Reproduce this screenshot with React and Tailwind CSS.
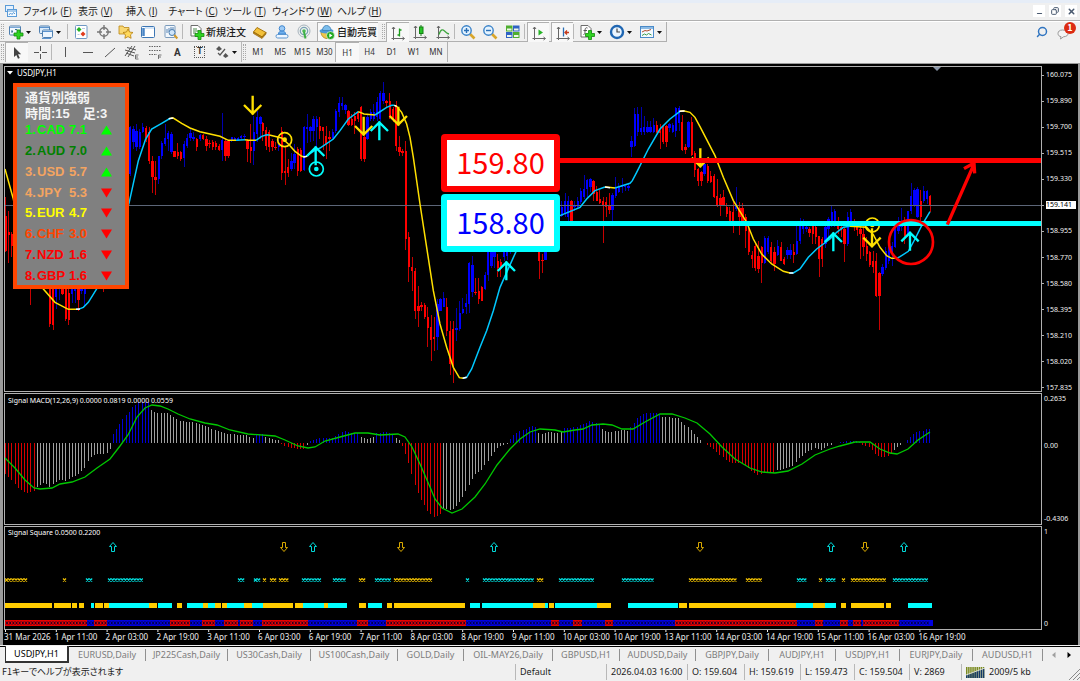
import { Search, Minus, X, Copy } from 'lucide-react';
import clsx from 'clsx';

const YELLOW = '#ffe000';
const CYAN = '#00ffff';
const SKY = '#00c8ff';

// Candle runs, drawn in thirds of a pixel: direction, high, body top, body bottom, low
const STEP = 9.525;
const CANDLES = [
    {
        start: 16,
        bars: 'd 400 455 560 565,d 440 505 512 597,d 503 510 545 579',
    },
    {
        start: 92,
        bars: 'd 600 610 640 722',
    },
    {
        start: 149,
        bars: 'd 600 620 780 790,d 600 620 782 797,u 600 620 700 735,u 600 620 665 708,d 600 620 690 693,d 600 620 766 770,d 600 686 768 783,u 600 640 690 716,u 600 640 680 718,d 600 675 708 740,u 600 620 680 690,u 600 620 690 728',
    },
    {
        start: 310,
        bars: 'd 600 620 670 684',
    },
    {
        start: 390,
        bars: 'u 185 190 330 335,u 185 195 235 255,u 180 200 250 260,u 195 205 250 255,u 177 190 203 208,d 185 192 222 235,d 190 205 292 300,d 275 292 338 387,d 290 338 347 392,u 275 275 345 360,u 230 238 275 285,u 180 222 240 245,u 200 207 225 260,u 203 210 265 270,d 262 262 278 280,d 238 265 275 285,d 262 265 285 290,u 230 240 282 308,u 210 222 245 252,u 195 207 222 230,u 205 220 224 230,d 222 225 250 262,u 210 213 225 232,d 210 213 225 228,d 215 225 245 262,d 228 237 241 252,d 228 233 248 258,d 232 237 248 258,d 240 245 258 262,u 148 228 258 290,d 225 230 275 292,d 228 230 275 283,u 218 220 232 235,u 218 222 230 232,u 218 222 230 232,u 212 217 222 228,u 210 215 220 226,d 225 230 255 295,d 180 248 262 298,u 155 205 262 303,u 140 160 210 235,u 155 160 180 225',
    },
    {
        start: 788,
        bars: 'd 175 177 200 230,d 190 197 245 258,d 198 205 250 265,d 225 232 250 260,d 235 248 253 258,u 215 240 250 260,d 190 200 328 347,d 245 320 328 363,d 285 310 328 340,u 268 292 315 320,u 240 270 298 315,d 250 255 320 335,d 253 258 322 324,u 185 188 318 320,u 150 190 195 238,u 185 190 200 235,u 155 165 200 232,u 155 165 188 250,d 160 185 200 225,d 190 190 202 258,d 185 215 240 285,d 200 218 225 260,u 195 205 222 228,u 135 142 202 206,u 100 118 145 160,u 98 118 125 138,u 120 122 138 150,d 138 140 183 186,d 150 165 183 186,d 145 155 172 210,d 140 145 165 175,d 125 130 285 290,d 215 220 285 295,u 150 160 225 228,u 135 145 165 170,u 120 145 165 170,u 100 115 160 170,u 82 88 165 170,u 55 88 112 120,d 107 110 118 130,d 87 110 160 165,d 130 135 162 175,d 110 130 245 262,d 215 248 265 275,d 255 262 268 277,d 230 262 525 558,d 505 520 610 655,d 580 610 620 682,d 612 620 740 765,d 667 725 740 788,d 715 722 728 742,d 718 722 760 765,d 730 760 792 850,d 752 790 827 890,d 758 820 826 862,u 705 720 818 858,u 702 705 740 742,u 685 702 728 730,d 702 728 802 817,d 770 802 900 933,d 772 795 902 957,u 733 793 797 832,u 712 748 795 800,u 702 735 748 750,u 690 718 730 750,u 595 598 720 748,u 575 602 685 700,d 642 683 688 692,d 643 680 705 720,d 665 668 710 712,u 625 632 675 678,u 540 550 632 652,u 540 550 605 612,u 540 550 580 612,d 570 590 612 638,d 585 595 612 640,u 540 550 580 590,u 540 550 575 588,u 520 530 560 570',
    },
    {
        start: 1617,
        bars: 'd 540 550 590 645,d 570 587 592 627,u 550 560 588 589',
    },
    {
        start: 1685,
        bars: 'u 410 430 455 458,u 388 410 450 460,u 395 410 460 470,d 408 410 470 472,u 410 425 430 440,u 400 412 428 432,u 372 380 415 420,u 332 375 400 405,u 345 348 375 400,u 342 345 370 385,d 348 352 390 412,d 365 385 410 412,d 378 405 418 420,d 400 412 425 537,d 400 415 430 460,d 388 425 437 450,u 388 392 437 475,u 340 372 395 402,u 358 365 385 388,u 342 362 368 388,u 360 365 370 380,u 358 365 372 382',
    },
    {
        start: 1894,
        bars: 'u 215 232 248 280,u 132 150 245 248,u 128 150 203 215,u 130 192 203 212,u 157 190 203 212,u 170 190 205 208,u 170 190 205 208,u 162 183 203 206,d 172 183 205 208,d 180 200 208 255,d 182 188 235 240,d 182 185 235 250,u 177 180 192 205,u 178 182 205 208,u 128 132 200 218,u 127 132 178 200,d 152 175 258 262,d 240 250 258 270,u 170 173 250 252,d 160 173 272 275,d 262 268 318 340,d 313 315 352 365,d 320 325 352 365,u 298 300 330 335,d 300 305 352 358,d 320 335 355 358,d 330 335 400 402,d 345 395 425 430,d 390 402 425 455,d 377 400 422 425,d 418 428 450 458,d 430 440 470 474,d 415 445 475 508,u 370 420 435 440,d 415 432 460 512,d 417 432 475 480,d 450 460 500 552,d 488 495 565 572,d 560 572 585 612,d 540 545 612 620,d 532 575 615 628,d 545 550 598 657,u 515 523 598 600,u 515 523 565 570,d 535 550 590 598,d 550 565 600 620',
    },
    {
        start: 2333,
        bars: 'u 528 545 572 575,d 535 548 590 592,d 580 585 600 602,u 550 558 573 585,u 540 558 572 585,d 540 565 572 597,u 480 530 570 572,u 462 480 530 540,u 465 480 495 510,u 480 490 495 505,d 490 495 508 520,d 480 485 510 540,d 485 490 520 540,d 515 517 585 638,d 518 525 585 608,u 485 490 540 552,u 460 465 495 520,u 422 445 470 490,u 435 442 480 490,d 460 470 495 510,d 485 488 498 520,d 490 495 540 595,u 445 460 540 545,u 435 443 475 485,d 465 475 485 500,d 480 490 498 515,d 485 495 510 585,d 485 510 550 575,d 520 545 570 590,d 560 563 602 610,d 560 590 608 627,d 567 590 695 698,d 625 627 695 797,u 600 610 630 635,u 550 560 612 618,u 545 550 590 600,u 535 545 570 605,u 490 495 550 552,u 460 480 500 510,u 433 485 490 500,d 460 475 515 540,u 440 442 510 520,u 358 395 442 450,u 372 378 425 430,u 370 375 460 462,d 378 412 460 470,u 367 380 412 418,u 378 382 405 420,d 394 395 425 445',
    },
];

const AVERAGE = [
    [YELLOW, '15,315 40,405 60,500 90,610 130,675 165,715 205,736 228,736'],
    [SKY, '228,736 235,736 250,730 265,715 290,675 340,560 387,418 415,290 437,225 455,195 485,178 512,162'],
    [YELLOW, '512,162 520,162 545,178 570,192 600,203 660,217 685,229 708,229'],
    [SKY, '708,229 735,227'],
    [YELLOW, '735,227 745,229 768,229'],
    [SKY, '768,229 785,217 800,212 808,213'],
    [YELLOW, '808,213 845,222 865,240 885,262 905,277 915,279'],
    [SKY, '915,279 940,262 960,252 1000,225 1020,200 1045,165 1075,143'],
    [YELLOW, '1075,143 1092,150 1125,153'],
    [SKY, '1125,153 1160,130 1175,124 1183,124'],
    [YELLOW, '1183,124 1190,127 1205,145 1220,180 1230,220 1240,280 1260,420 1280,550 1300,680 1320,780 1340,850 1360,910 1378,941 1390,943'],
    [SKY, '1390,943 1400,940 1415,915 1440,850 1460,800 1480,740 1500,670 1520,625 1547,565 1600,500 1680,455 1740,430 1760,405 1785,380 1815,369'],
    [YELLOW, '1815,369 1825,370 1845,372'],
    [SKY, '1845,372 1890,358 1897,350 1910,325 1945,255 1980,195 2010,165 2040,142'],
    [YELLOW, '2040,142 2050,140 2070,145 2085,160 2100,188 2145,275 2170,340 2200,410 2240,475 2260,525 2285,570 2315,600 2350,622 2370,627'],
    [SKY, '2370,627 2380,627 2400,615 2425,580 2450,555 2490,525 2510,505 2530,490 2550,487'],
    [YELLOW, '2550,487 2600,490 2620,512 2640,550 2660,575 2675,583 2690,583'],
    [SKY, '2690,583 2700,578 2725,562 2745,525 2765,485 2790,443'],
];

const TURNS = ['228,736 240,735', '506,164 520,162', '910,279 922,277', '1183,124 1190,127', '1388,943 1400,940', '1815,369 1830,371', '2038,142 2054,141', '2368,627 2380,627'];

const ARROWS = [
    { dir: 'down', x: 758, tip: 152 },
    { dir: 'up', x: 947, tip: 247 },
    { dir: 'down', x: 1091, tip: 215 },
    { dir: 'up', x: 1138, tip: 172 },
    { dir: 'down', x: 1195, tip: 185 },
    { dir: 'up', x: 1519, tip: 592 },
    { dir: 'down', x: 2101, tip: 310 },
    { dir: 'up', x: 2500, tip: 505 },
    { dir: 'down', x: 2616, tip: 550 },
    { dir: 'up', x: 2730, tip: 503 },
];

const TARGETS = [
    [854, 227, YELLOW],
    [949, 315, CYAN],
    [2617, 483, YELLOW],
];

const PRICES = ['160.075', '159.890', '159.700', '159.515', '159.330', '159.141', '158.955', '158.770', '158.580', '158.395', '158.210', '158.020', '157.835'];
const LAST_PRICE = '159.141';

const STRENGTH = [
    { code: 'CAD', value: '7.1', up: true, color: 'text-[#00ff00]' },
    { code: 'AUD', value: '7.0', up: true, color: 'text-[#008000]' },
    { code: 'USD', value: '5.7', up: true, color: 'text-[#f4a460]' },
    { code: 'JPY', value: '5.3', up: false, color: 'text-[#f4a460]' },
    { code: 'EUR', value: '4.7', up: false, color: 'text-[#ffff00]' },
    { code: 'CHF', value: '3.0', up: false, color: 'text-[#ff4500]' },
    { code: 'NZD', value: '1.6', up: false, color: 'text-[#ff0000]' },
    { code: 'GBP', value: '1.6', up: false, color: 'text-[#ff0000]' },
];

const ZERO = 443;
const HISTOGRAM = [
    ['#d80000', [[5, 474], [10, 478], [15, 485], [20, 490], [27, 493], [36, 490]]],
    ['#a0a0a0', [[36, 487], [44, 482], [50, 487], [55, 482], [60, 479], [66, 481], [72, 477], [78, 474], [84, 469], [88, 460], [93, 455], [107, 453], [112, 445]]],
    ['#0000d8', [[112, 436], [117, 428], [122, 419], [128, 413], [133, 406], [139, 402], [150, 402]]],
    ['#a0a0a0', [[150, 409], [156, 413], [168, 413], [174, 418], [180, 421], [190, 422], [200, 424], [210, 428], [220, 432], [228, 434], [245, 435], [253, 438]]],
    ['#0000d8', [[253, 434], [265, 434]]],
    ['#a0a0a0', [[265, 437], [280, 441]]],
    ['#d80000', [[280, 444], [290, 448], [304, 449]]],
    ['#a0a0a0', [[304, 446], [308, 445]]],
    ['#0000d8', [[308, 441], [320, 438], [332, 438], [340, 433], [345, 431], [352, 433], [360, 433]]],
    ['#a0a0a0', [[360, 437], [368, 439], [376, 436]]],
    ['#0000d8', [[376, 433], [388, 432], [395, 435]]],
    ['#a0a0a0', [[395, 438], [401, 442]]],
    ['#d80000', [[401, 444], [408, 462], [415, 487], [422, 502], [428, 512], [434, 517], [443, 513]]],
    ['#a0a0a0', [[443, 509], [452, 510], [458, 504], [466, 490], [474, 475], [482, 469], [490, 457], [498, 447], [507, 444]]],
    ['#0000d8', [[507, 442], [514, 434], [522, 430], [532, 426], [538, 428]]],
    ['#a0a0a0', [[538, 433], [543, 434], [549, 431], [555, 433], [561, 432]]],
    ['#0000d8', [[561, 429], [566, 428], [576, 427], [590, 421], [599, 424]]],
    ['#a0a0a0', [[599, 427], [605, 431], [610, 432], [622, 430], [630, 431]]],
    ['#0000d8', [[630, 428], [636, 419], [642, 414], [650, 413], [657, 413], [662, 415]]],
    ['#a0a0a0', [[662, 417], [678, 418], [682, 423], [690, 429], [695, 435], [702, 442]]],
    ['#d80000', [[706, 444], [715, 451], [722, 457], [730, 463], [742, 463], [750, 470], [758, 475], [765, 473], [774, 473]]],
    ['#a0a0a0', [[774, 471], [782, 469], [792, 466], [800, 457], [808, 451], [815, 448], [820, 450], [826, 447], [832, 444]]],
    ['#0000d8', [[840, 442], [852, 441], [861, 442]]],
    ['#d80000', [[861, 444], [870, 448], [877, 456], [883, 458], [891, 454]]],
    ['#a0a0a0', [[891, 452], [897, 447], [903, 444]]],
    ['#0000d8', [[905, 442], [912, 435], [915, 432], [922, 431], [926, 429], [932, 428]]],
];

const SIGNAL_LINE =
    '5,458 15,468 25,480 34,488 40,489 52,488 60,484 72,482 85,477 97,468 110,459 120,446 128,435 137,417 145,408 152,405 160,406 168,409 178,414 190,419 205,423 217,425 230,430 248,434 275,436 285,440 298,446 308,448 315,447 325,441 340,437 355,433 368,433 380,435 398,434 405,437 412,447 420,464 430,487 435,499 442,508 452,513 462,509 475,497 485,484 497,465 510,449 520,439 530,432 540,429 555,430 563,432 575,430 583,429 592,425 603,424 612,425 622,429 633,429 645,422 660,414 672,414 685,418 697,423 710,434 722,447 735,459 750,468 762,472 775,473 788,471 802,464 815,455 830,449 840,446 855,442 870,442 880,449 890,453 897,454 908,449 918,440 930,432';

const CROSSES = [
    ['y', 5, 29], ['y', 63, 67], ['c', 86, 95], ['c', 108, 146], ['c', 238, 245], ['c', 254, 263], ['y', 263, 267], ['y', 270, 277],
    ['y', 279, 289], ['c', 302, 324], ['c', 333, 346], ['y', 359, 366], ['c', 375, 393], ['y', 394, 435], ['c', 466, 470], ['c', 483, 534],
    ['y', 537, 544], ['c', 559, 594], ['c', 622, 654], ['y', 689, 737], ['y', 746, 763], ['c', 797, 807], ['y', 819, 823], ['c', 826, 836],
    ['y', 842, 846], ['y', 851, 887], ['c', 893, 928],
];

const BLOCKS = [
    ['y', 5, 52], ['y', 54, 71], ['y', 72, 77], ['y', 79, 84], ['c', 91, 94], ['y', 95, 103], ['y', 104, 109], ['c', 109, 149],
    ['y', 149, 157], ['c', 158, 172], ['y', 177, 182], ['c', 187, 203], ['y', 203, 208], ['c', 208, 215], ['y', 215, 221], ['y', 222, 227],
    ['c', 227, 244], ['y', 244, 252], ['c', 252, 263], ['y', 263, 293], ['y', 295, 303], ['c', 303, 324], ['y', 324, 328], ['c', 328, 347],
    ['y', 359, 366], ['c', 368, 382], ['y', 387, 392], ['y', 394, 465], ['c', 470, 480], ['c', 482, 533], ['y', 533, 545], ['c', 545, 548],
    ['y', 549, 554], ['c', 555, 597], ['y', 597, 611], ['c', 628, 678], ['y', 679, 687], ['y', 689, 796], ['c', 796, 813], ['y', 813, 825],
    ['c', 825, 836], ['y', 841, 846], ['y', 851, 884], ['y', 886, 891], ['c', 908, 932],
];

const DOWNTREND = [
    [5, 87], [94, 107], [170, 190], [202, 215], [224, 238], [240, 253], [262, 308], [357, 368], [386, 466],
    [551, 559], [573, 582], [605, 613], [675, 797], [815, 823], [840, 848], [853, 861], [863, 899],
];

const HOLLOW_ARROWS = [['up', 113], ['down', 284], ['up', 313], ['down', 401], ['up', 494], ['down', 700], ['up', 831], ['down', 865], ['up', 904]];

const TIMES = [
    '31 Mar 2026', '1 Apr 11:00', '2 Apr 03:00', '2 Apr 19:00', '3 Apr 11:00', '6 Apr 03:00', '6 Apr 19:00', '7 Apr 11:00', '8 Apr 03:00', '8 Apr 19:00',
    '9 Apr 11:00', '10 Apr 03:00', '10 Apr 19:00', '13 Apr 11:00', '14 Apr 03:00', '14 Apr 19:00', '15 Apr 11:00', '16 Apr 03:00', '16 Apr 19:00',
];

const MENU = [
    ['ファイル', 'F', 'w-[55px]'],
    ['表示', 'V', 'w-[48px]'],
    ['挿入', 'I', 'w-[42px]'],
    ['チャート', 'C', 'w-[55px]'],
    ['ツール', 'T', 'w-[49px]'],
    ['ウィンドウ', 'W', 'w-[65px]'],
    ['ヘルプ', 'H', 'w-[55px]'],
];

const TABS = [
    ['EURUSD,Daily', 'w-[77px]'],
    ['JP225Cash,Daily', 'w-[82px]'],
    ['US30Cash,Daily', 'w-[83px]'],
    ['US100Cash,Daily', 'w-[87px]'],
    ['GOLD,Daily', 'w-[66px]'],
    ['OIL-MAY26,Daily', 'w-[89px]'],
    ['GBPUSD,H1', 'w-[67px]'],
    ['AUDUSD,Daily', 'w-[76px]'],
    ['GBPJPY,Daily', 'w-[73px]'],
    ['AUDJPY,H1', 'w-[67px]'],
    ['USDJPY,H1', 'w-[64px]'],
    ['EURJPY,Daily', 'w-[73px]'],
    ['AUDUSD,H1', 'w-[70px]'],
];

const STATUS = [
    ['Default', 'w-[91px]'],
    ['2026.04.03 16:00', 'w-[81px]'],
    ['O: 159.604', 'w-[57px]'],
    ['H: 159.619', 'w-[56px]'],
    ['L: 159.473', 'w-[54px]'],
    ['C: 159.504', 'w-[55px]'],
    ['V: 2869', 'w-[52px]'],
];

const TIMEFRAMES = ['M1', 'M5', 'M15', 'M30', 'H1', 'H4', 'D1', 'W1', 'MN'];

/* ---------- icons ---------- */

const Icon = ({ children }) => (
    <svg width="16" height="16" viewBox="0 0 16 16" fill="none" className="shrink-0" aria-hidden="true">
        {children}
    </svg>
);

const Plus = ({ x = 6, y = 6 }) => (
    <path
        d={`M${x + 3} ${y}h3v3h3v3h-3v3h-3v-3h-3v-3h3z`}
        fill="#2fd321"
        stroke="#118a0c"
        strokeWidth="0.8"
    />
);

const NewChartIcon = () => (
    <Icon>
        <rect x="1.5" y="2" width="11" height="9" rx="1" fill="#f4f9ff" stroke="#5080b0" />
        <path d="M2 3.5h10" stroke="#7aa8d8" />
        <path d="M3.5 7.5h1.5M4 6v3M7 5.5h2" stroke="#407090" />
        <Plus />
    </Icon>
);

const ProfilesIcon = () => (
    <Icon>
        <rect x="1.5" y="2" width="10" height="7.5" rx="1" fill="#dcecfb" stroke="#5080b0" />
        <path d="M2 3.5h9" stroke="#5b93cf" />
        <rect x="4.5" y="6" width="10" height="7.5" rx="1" fill="#edf6ff" stroke="#5080b0" />
        <path d="M5 7.5h9M4 14.5h9" stroke="#5b93cf" />
    </Icon>
);

const MarketIcon = () => (
    <Icon>
        <rect x="2.5" y="1.5" width="11.5" height="13" rx="1" fill="#fff" stroke="#6f98c4" />
        <path d="M3.5 5.5L6 3l2.5 2.5L6 8z" fill="#22b422" />
        <path d="M7.5 10L10 7.5l2.5 2.5-2.5 2.5z" fill="#e13b1c" />
        <path d="M9 4.5h3M4.5 10.5h2" stroke="#b9cde0" />
    </Icon>
);

const CrosshairIcon = () => (
    <Icon>
        <circle cx="8" cy="8" r="4.2" stroke="#777" strokeWidth="1.4" />
        <path d="M8 1v5M8 10v5M1 8h5M10 8h5" stroke="#777" strokeWidth="1.4" />
    </Icon>
);

const NavigatorIcon = () => (
    <Icon>
        <path d="M1 2h4l1 1.5h5V10H1z" fill="#f9d873" stroke="#b98514" strokeWidth="0.8" />
        <path d="M10 5l1.5 3 3.5.5-2.5 2.3.6 3.5-3.1-1.7-3.1 1.7.6-3.5L5 8.5l3.5-.5z" fill="#ffd95c" stroke="#b57d0c" strokeWidth="0.8" />
    </Icon>
);

const TerminalIcon = () => (
    <Icon>
        <rect x="1.5" y="2.5" width="13" height="11" rx="1" fill="#fff" stroke="#3c76b4" />
        <path d="M3.5 4v8" stroke="#4a86c6" strokeWidth="2.5" />
        <path d="M5 4h9" stroke="#a9cbee" />
    </Icon>
);

const TesterIcon = () => (
    <Icon>
        <rect x="2" y="1.5" width="10" height="12" rx="1" fill="#f2f7fc" stroke="#7a9abb" />
        <path d="M4 9V5M6 8V4M8 6V3M10 7V3" stroke="#5a86b5" />
        <circle cx="9" cy="8.5" r="3" fill="#cfe6fb" stroke="#4a7cae" />
        <path d="M11.3 11l3 3.5" stroke="#d29a2a" strokeWidth="2" />
    </Icon>
);

const NewOrderIcon = () => (
    <Icon>
        <path d="M2 1.5h7l3 3V12H2z" fill="#fff" stroke="#6d6d6d" />
        <path d="M4 5h4M4 7h5M4 9h3" stroke="#4a8a4a" />
        <Plus x={6} y={6.5} />
    </Icon>
);

const BookIcon = () => (
    <Icon>
        <path d="M5 3.5l9 5L10 13 1.5 8z" fill="#f3c13a" stroke="#a8760e" />
        <path d="M1.5 8v1.5L10 14.5l4-4.5V8.5L10 13z" fill="#c98d15" stroke="#8f640c" strokeWidth="0.7" />
    </Icon>
);

const AccountIcon = () => (
    <Icon>
        <circle cx="8" cy="4.5" r="2.8" fill="#9ccaf5" stroke="#3f86cf" />
        <path d="M4.5 10c0-2 1.5-3 3.5-3s3.5 1 3.5 3z" fill="#6fb0ee" stroke="#3f86cf" />
        <rect x="2" y="10.5" width="12" height="3.5" rx="1.7" fill="#eef6ff" stroke="#5a95d0" />
    </Icon>
);

const SignalsIcon = () => (
    <Icon>
        <circle cx="8" cy="7" r="6" stroke="#a8b4bd" />
        <circle cx="8" cy="7" r="3.7" stroke="#7aa4b4" strokeWidth="1.3" />
        <circle cx="8" cy="7" r="1.8" fill="#4ab854" />
        <path d="M8 8l1.5 6.5" stroke="#3cb043" strokeWidth="2" />
    </Icon>
);

const RobotIcon = () => (
    <Icon>
        <path d="M2 8c0 4 3 6.5 6 6.5S13 12 13 8z" fill="#f0c64a" stroke="#a9801a" strokeWidth="0.8" />
        <ellipse cx="7.5" cy="7" rx="7" ry="2.5" fill="#4e9ad6" />
        <path d="M3.5 6.5C3.5 3 5.5 1.5 7.5 1.5S12 3 12 6.5z" fill="#7bbdec" stroke="#3a7db5" strokeWidth="0.8" />
        <circle cx="11.5" cy="11.5" r="4" fill="#22a822" stroke="#fff" strokeWidth="0.6" />
        <path d="M10.3 9.5v4l3.2-2z" fill="#fff" />
    </Icon>
);

const AxisBase = () => <path d="M3.5 2v11.5H14M2 4l1.5-2L5 4M12.5 12l2 1.5-2 1.5M1.5 13.5h2v1.5" stroke="#666" />;

const BarsIcon = () => (
    <Icon>
        <AxisBase />
        <path d="M9.5 3.5v8M9.5 5h2M7.5 10h2" stroke="#1b9a1b" strokeWidth="1.3" />
    </Icon>
);

const CandlesIcon = () => (
    <Icon>
        <AxisBase />
        <path d="M9 1v11" stroke="#1b7a1b" />
        <rect x="7.5" y="3" width="3.5" height="6.5" fill="#27c427" stroke="#138013" />
    </Icon>
);

const LineIcon = () => (
    <Icon>
        <AxisBase />
        <path d="M4 10.5c2-6 4-5 5.5-3.5s2.5 2.5 4.5 3" stroke="#3fa63f" strokeWidth="1.3" />
    </Icon>
);

const ZoomIcon = ({ plus }) => (
    <Icon>
        <path d="M10 10l4.5 4.5" stroke="#d9a62b" strokeWidth="2.6" />
        <circle cx="6.5" cy="6.5" r="4.7" fill="#e4f3ff" stroke="#3a82c8" strokeWidth="1.4" />
        <path d={plus ? 'M4 6.5h5M6.5 4v5' : 'M4 6.5h5'} stroke="#2a6fb5" strokeWidth="1.4" />
    </Icon>
);

const TileIcon = () => (
    <Icon>
        <rect x="1" y="1.5" width="6.5" height="6" fill="#4fae2f" />
        <rect x="8" y="1.5" width="6.5" height="6" fill="#2f62c4" />
        <rect x="1" y="8" width="6.5" height="6" fill="#2f62c4" />
        <rect x="8" y="8" width="6.5" height="6" fill="#4fae2f" />
        <path d="M2 5.5h4.5M9 5.5h4.5M2 12h4.5M9 12h4.5" stroke="#eef6e8" strokeWidth="2" />
    </Icon>
);

const ScrollIcon = () => (
    <Icon>
        <AxisBase />
        <path d="M7.5 4.5v6l4.5-3z" fill="#27b427" />
    </Icon>
);

const ShiftIcon = () => (
    <Icon>
        <AxisBase />
        <path d="M8.5 2.5v9" stroke="#2a6fb5" strokeWidth="1.3" />
        <path d="M10 7.5h4M12 5.5l-2 2 2 2" stroke="#c43b1c" strokeWidth="1.3" />
    </Icon>
);

const IndicatorIcon = () => (
    <Icon>
        <path d="M2 1.5h7l3 3V13H2z" fill="#fff" stroke="#6d6d6d" />
        <path d="M8.5 4c-2-1-2.5 1-2.5 3s0 3.5-1.5 3.5M4.5 6.5H8" stroke="#555" />
        <Plus x={6.5} y={6.5} />
    </Icon>
);

const ClockIcon = () => (
    <Icon>
        <circle cx="8" cy="8" r="6" fill="#eaf5ff" stroke="#1f66b2" strokeWidth="2.4" />
        <path d="M8 4.5V8h3" stroke="#444" strokeWidth="1.2" />
    </Icon>
);

const TemplateIcon = () => (
    <Icon>
        <rect x="1.5" y="2.5" width="13" height="11" fill="#f4faff" stroke="#4a8ac8" />
        <path d="M2 4h12" stroke="#6aa6dd" strokeWidth="1.5" />
        <path d="M3 8l3-1.5 2 .5 4-1.5" stroke="#b04a2a" />
        <path d="M3 11.5L5.5 10l2 1 2-1.5 3 1.5" stroke="#3a9a4a" />
    </Icon>
);

const CursorIcon = () => (
    <Icon>
        <path d="M5 2v10l2.3-2L9 13.8l1.8-.8L9 9.3h3.2z" fill="#444" />
    </Icon>
);

const ToolIcon = ({ d }) => (
    <Icon>
        <path d={d} stroke="#555" />
    </Icon>
);

const ChannelIcon = () => (
    <Icon>
        <path d="M1 12L8 2M4 13l7-11M1 6l10 3M3 3.5L12 6M2 9l8 3" stroke="#555" />
        <path d="M14.5 11h-3v4h3M11.5 13H14" stroke="#555" strokeWidth="0.8" />
    </Icon>
);

const FiboIcon = () => (
    <Icon>
        <path d="M2 2.5h12M2 6.5h12M2 10.5h8" stroke="#666" strokeDasharray="1.5 1" />
        <path d="M11.5 15v-4h3M11.5 13h2.5" stroke="#555" strokeWidth="0.8" />
    </Icon>
);

const ObjectsIcon = () => (
    <Icon>
        <path d="M2 5l3-3 3 3-3 2zM9 12l2.5-3 3 3-3 2z" fill="#555" />
        <path d="M4 9l2 2 5-6" stroke="#555" strokeWidth="1.2" />
    </Icon>
);

/* ---------- toolbar pieces ---------- */

const Handle = () => <span className="mx-px my-0.5 w-[3px] shrink-0 border-x border-dotted border-[#a8a8a8]" />;

const Divider = () => <span className="my-0.5 w-[3px] shrink-0 border-l border-[#b8b8b8]" />;

const Caret = () => (
    <svg width="5" height="3" viewBox="0 0 5 3" aria-hidden="true">
        <path d="M0 0h5L2.5 3z" fill="#111" />
    </svg>
);

const ToolButton = ({ label, pressed, caret, children }) => (
    <button
        type="button"
        aria-label={label}
        className={clsx(
            'flex h-5 items-center',
            caret ? 'w-[30px] shrink-0 gap-0.5 pl-[3px]' : 'min-w-0 flex-1 justify-center',
            pressed && 'border-t border-l border-[#b0b0b0] bg-[#f8f8f8]',
        )}
    >
        {children}
        {caret && <Caret />}
    </button>
);

const MenuBar = () => (
    <div className="flex h-4 items-center pl-[5px]">
        <svg width="12" height="12" viewBox="0 0 12 12" fill="none" className="mr-1.5 shrink-0" aria-hidden="true">
            <rect x="0.5" y="0.5" width="8" height="6" fill="#e6f2ff" stroke="#5a9bd8" />
            <rect x="2.5" y="4.5" width="9" height="7" fill="#f4faff" stroke="#5a9bd8" />
            <path d="M3 6h8M4 10l1.5-2L7 9.5l1.5-2L10 9" stroke="#5a9bd8" />
        </svg>
        <nav className="flex flex-1 text-[10px] leading-4 [font-feature-settings:'palt']">
            {MENU.map(([name, key, width]) => (
                <button key={key} type="button" className={clsx('shrink-0 whitespace-nowrap text-left', width)}>
                    {name} (<u>{key}</u>)
                </button>
            ))}
        </nav>
        <div className="flex gap-1 pr-[3px] text-[#4a5a70]">
            <button type="button" aria-label="Minimize" className="flex h-3 w-3 items-end justify-center bg-white">
                <Minus size={7} strokeWidth={4} />
            </button>
            <button type="button" aria-label="Restore" className="flex h-3 w-3 items-center justify-center bg-white">
                <Copy size={8} strokeWidth={3} className="-scale-x-100" />
            </button>
            <button type="button" aria-label="Close" className="flex h-3 w-3 items-center justify-center bg-white">
                <X size={9} strokeWidth={4} />
            </button>
        </div>
    </div>
);

const MainToolbar = () => (
    <div className="flex h-[21px] items-center justify-between border-t border-white">
        <div className="flex h-5 border-r border-b border-[#b0b0b0]">
            <Handle />
            <ToolButton label="New chart" caret><NewChartIcon /></ToolButton>
            <ToolButton label="Profiles" caret><ProfilesIcon /></ToolButton>
            <span className="w-0.5" />
            <Divider />
            <div className="flex w-[112px]">
                <ToolButton label="Market watch"><MarketIcon /></ToolButton>
                <ToolButton label="Data window"><CrosshairIcon /></ToolButton>
                <ToolButton label="Navigator"><NavigatorIcon /></ToolButton>
                <ToolButton label="Terminal"><TerminalIcon /></ToolButton>
                <ToolButton label="Strategy tester"><TesterIcon /></ToolButton>
            </div>
            <Divider />
            <button type="button" className="flex w-16 items-center gap-px pl-1 text-[10px] leading-4 font-medium whitespace-nowrap">
                <NewOrderIcon />
                新規注文
            </button>
            <div className="flex w-[66px]">
                <ToolButton label="MetaEditor"><BookIcon /></ToolButton>
                <ToolButton label="Account"><AccountIcon /></ToolButton>
                <ToolButton label="Signals"><SignalsIcon /></ToolButton>
            </div>
            <button
                type="button"
                className="mr-[3px] ml-0.5 flex w-[61px] items-center gap-0.5 border-t border-l border-[#b0b0b0] bg-[#f8f8f8] pl-px text-[10px] leading-4 font-medium whitespace-nowrap"
            >
                <RobotIcon />
                自動売買
            </button>
            <Handle />
            <div className="flex w-[68px]">
                <ToolButton label="Bar chart" pressed><BarsIcon /></ToolButton>
                <ToolButton label="Candlesticks"><CandlesIcon /></ToolButton>
                <ToolButton label="Line chart"><LineIcon /></ToolButton>
            </div>
            <Divider />
            <div className="flex w-[67px]">
                <ToolButton label="Zoom in"><ZoomIcon plus /></ToolButton>
                <ToolButton label="Zoom out"><ZoomIcon /></ToolButton>
                <ToolButton label="Tile windows"><TileIcon /></ToolButton>
            </div>
            <Divider />
            <div className="flex w-[46px] gap-0.5">
                <ToolButton label="Auto scroll" pressed><ScrollIcon /></ToolButton>
                <ToolButton label="Chart shift" pressed><ShiftIcon /></ToolButton>
            </div>
            <Divider />
            <ToolButton label="Indicators" caret><IndicatorIcon /></ToolButton>
            <ToolButton label="Periods" caret><ClockIcon /></ToolButton>
            <ToolButton label="Templates" caret><TemplateIcon /></ToolButton>
        </div>
        <div className="flex items-center gap-2 pr-1">
            <button type="button" aria-label="Search">
                <Search size={12} strokeWidth={3} className="-scale-x-100 text-[#2f74c0]" />
            </button>
            <button type="button" aria-label="Notifications" className="relative h-4 w-5">
                <svg width="12" height="12" viewBox="0 0 12 12" className="mt-1 ml-px" aria-hidden="true">
                    <path d="M5.5 2C2.5 2 1 3.5 1 5.5S2.5 8.5 4 8.7L3.5 11l3-2.2C9.5 8.5 11 7.5 11 5.5S8.5 2 5.5 2z" fill="#f4f4f4" stroke="#999" />
                </svg>
                <span className="absolute -top-0.5 right-0 flex h-3 w-3 items-center justify-center rounded-full bg-[#dc2c12] text-[9px] leading-3 font-bold text-white">1</span>
            </button>
        </div>
    </div>
);

const DrawingToolbar = () => (
    <div className="flex h-[21px]">
        <div className="flex h-5 border-r border-[#b0b0b0] text-[#333]">
            <Handle />
            <div className="flex w-[46px] gap-0.5">
                <ToolButton label="Cursor" pressed><CursorIcon /></ToolButton>
                <ToolButton label="Crosshair"><ToolIcon d="M8.5 2v5M8.5 10v5M2 8.5h5M10 8.5h5" /></ToolButton>
            </div>
            <Divider />
            <div className="flex w-[157px]">
                <ToolButton label="Vertical line"><ToolIcon d="M8.5 3v10" /></ToolButton>
                <ToolButton label="Horizontal line"><ToolIcon d="M3 8.5h10" /></ToolButton>
                <ToolButton label="Trendline"><ToolIcon d="M3 13L13 4" /></ToolButton>
                <ToolButton label="Channel"><ChannelIcon /></ToolButton>
                <ToolButton label="Fibonacci"><FiboIcon /></ToolButton>
                <ToolButton label="Text"><span className="font-[Roboto] text-[10px] font-bold">A</span></ToolButton>
                <ToolButton label="Text label">
                    <span className="flex h-3 w-[11px] items-center justify-center border border-dotted border-[#555] font-[Roboto] text-[9px] font-bold">T</span>
                </ToolButton>
            </div>
            <div className="flex border-r border-[#b8b8b8]">
                <ToolButton label="Objects" caret><ObjectsIcon /></ToolButton>
            </div>
            <Handle />
            <div className="flex w-[200px] font-['Noto_Sans'] text-[8px]">
                {TIMEFRAMES.map((tf) => (
                    <ToolButton key={tf} pressed={tf === 'H1'}>{tf}</ToolButton>
                ))}
            </div>
        </div>
    </div>
);

/* ---------- chart ---------- */

const Candle = ({ x, bar }) => {
    const [dir, high, top, bottom, low] = bar.split(' ');
    const up = dir === 'u';
    return (
        <>
            <rect x={x - 1} y={high} width="3" height={low - high} fill={up ? '#0000b0' : '#c80000'} />
            <rect x={x - 3} y={top} width="7" height={Math.max(bottom - top, 3)} fill={up ? '#0000ff' : '#ff0000'} />
        </>
    );
};

const SignalArrow = ({ dir, x, tip }) => {
    const s = dir === 'up' ? 1 : -1;
    return (
        <path
            d={`M${x} ${tip + 57 * s}V${tip}M${x - 26} ${tip + 29 * s}L${x} ${tip + 3 * s}L${x + 26} ${tip + 29 * s}`}
            fill="none"
            stroke={dir === 'up' ? CYAN : YELLOW}
            strokeWidth="7"
        />
    );
};

const StrengthPanel = () => (
    <div className="absolute top-4 left-2 flex h-[206px] w-[116px] flex-col border-4 border-[#ff4500] bg-[#808080] pt-[3px] pb-px pl-2 text-[13px]">
        <div className="font-['Liberation_Sans','Noto_Sans_CJK_JP',sans-serif] leading-4 font-bold whitespace-pre text-[#f4f4f4]">
            <p>通貨別強弱</p>
            <p>時間:15　足:3</p>
        </div>
        <ul className="flex flex-1 flex-col justify-between font-['Liberation_Sans'] leading-4 font-bold">
            {STRENGTH.map(({ code, value, up, color }, i) => (
                <li key={code} className={clsx('flex items-center', color)}>
                    <span className="w-3">{i + 1}.</span>
                    <span className="w-8">{code}</span>
                    <span className="w-8">{value}</span>
                    <svg width="11" height="10" viewBox="0 0 12 10" aria-hidden="true">
                        <path d={up ? 'M6 0l6 10H0z' : 'M6 10L0 0h12z'} fill={up ? '#00ff00' : '#ff0000'} />
                    </svg>
                </li>
            ))}
        </ul>
    </div>
);

const PriceTag = ({ className, children }) => (
    <div
        className={clsx(
            "flex h-[58px] w-[119px] items-center justify-center rounded border-[6px] bg-white pb-1 font-['Noto_Sans_CJK_JP'] text-[29px] leading-10",
            className,
        )}
    >
        {children}
    </div>
);

const PricePanel = () => (
    <div className="flex">
        <div className="relative h-[326px] min-w-0 flex-1 border border-[#b0b0b0]">
            <svg className="h-full w-full" aria-label="USDJPY hourly candles">
                <g transform="translate(-5 -3) scale(0.33333)">
                    <g shapeRendering="crispEdges">
                        {CANDLES.map(({ start, bars }) =>
                            bars.split(',').map((bar, i) => <Candle key={`${start}-${i}`} x={start + i * STEP} bar={bar} />),
                        )}
                    </g>
                </g>
                <path d="M0 138.5H1100" stroke="#5c6678" />
                <g transform="translate(-5 -3) scale(0.33333)" fill="none">
                    {AVERAGE.map(([color, points]) => (
                        <polyline key={points} points={points} stroke={color} strokeWidth="4.5" />
                    ))}
                    {TURNS.map((points) => (
                        <polyline key={points} points={points} stroke="#fff" strokeWidth="4.5" />
                    ))}
                    {ARROWS.map((arrow) => (
                        <SignalArrow key={arrow.x} {...arrow} />
                    ))}
                    {TARGETS.map(([x, y, color]) => (
                        <g key={x}>
                            <circle cx={x} cy={y} r="21" stroke={color} strokeWidth="5" />
                            <circle cx={x} cy={y} r="7" fill={color} />
                        </g>
                    ))}
                </g>
                <g strokeWidth="5">
                    <line x1="550" x2="100%" y1="93.5" y2="93.5" stroke="#ff0000" />
                    <line x1="550" x2="100%" y1="156.5" y2="156.5" stroke={CYAN} />
                </g>
                <g transform="translate(-5 -3) scale(0.33333)" fill="none" stroke="#ff0000">
                    <circle cx="2733" cy="534" r="66" strokeWidth="8" />
                    <path d="M2842 482L2920 305M2892 314L2922 297L2924 328" strokeWidth="10" />
                </g>
                <path d="M928 0h8l-4 4z" fill="#8a96a8" />
            </svg>
            <h1 className="absolute top-0 left-0.5 flex items-center gap-1 text-[8px] leading-3 text-white">
                <svg width="6" height="4" viewBox="0 0 6 4" aria-hidden="true">
                    <path d="M0 0h6L3 3.5z" fill="#fff" />
                </svg>
                USDJPY,H1
            </h1>
            <StrengthPanel />
            <div className="absolute top-[67px] left-[436px] flex flex-col gap-0.5">
                <PriceTag className="border-[#ff0000] text-[#ff0000]">159.80</PriceTag>
                <PriceTag className="border-[#00ffff] text-[#0000ff]">158.80</PriceTag>
            </div>
        </div>
        <div className="flex w-[35px] flex-col justify-between pt-[5px] leading-2">
            {PRICES.map((price) => (
                <div key={price} className="flex items-center gap-0.5">
                    <span className="h-px w-0.5 bg-[#b0b0b0]" />
                    <span className={clsx(price === LAST_PRICE && 'bg-white pr-1 text-black')}>{price}</span>
                </div>
            ))}
        </div>
    </div>
);

// Height of the histogram at x, read between its two neighbouring points
const levelAt = (points, x) => {
    const i = points.findIndex(([px]) => px >= x);
    if (i <= 0) return points[0][1];
    const [x0, y0] = points[i - 1];
    const [x1, y1] = points[i];
    return y0 + ((y1 - y0) * (x - x0)) / (x1 - x0);
};

const histogramBars = Array.from({ length: 292 }, (_, i) => 5 + i * 3.175).flatMap((x) => {
    const run = HISTOGRAM.find(([, points]) => x >= points[0][0] && x < points[points.length - 1][0]);
    return run ? [{ x: Math.round(x), y: Math.round(levelAt(run[1], x)), color: run[0] }] : [];
});

const MacdPanel = () => (
    <div className="mt-px flex">
        <div className="relative h-[132px] min-w-0 flex-1 border border-[#b0b0b0]">
            <svg className="h-full w-full" aria-label="Signal MACD">
                <g transform="translate(-5 -394)">
                    {histogramBars.map(({ x, y, color }) => (
                        <rect key={x} x={x} y={Math.min(y, ZERO)} width="1" height={Math.max(Math.abs(y - ZERO), 1)} fill={color} />
                    ))}
                    <polyline points={SIGNAL_LINE} fill="none" stroke="#00c800" strokeWidth="1.3" />
                </g>
            </svg>
            <p className="absolute top-px left-[3px] leading-3 text-white">Signal MACD(12,26,9) 0.0000 0.0819 0.0000 0.0559</p>
        </div>
        <div className="flex w-[35px] flex-col pt-0.5 pb-0.5 pl-0.5 leading-2">
            <span className="grow-3">0.2635</span>
            <span className="grow-5">0.00</span>
            <span>-0.4306</span>
        </div>
    </div>
);

const tone = { y: '#ffcc00', c: '#00ffff' };
const steps = (from, to) => Array.from({ length: Math.max(1, Math.floor((to - from) / 3.175)) }, (_, i) => from + i * 3.175);

const SquarePanel = () => (
    <div className="mt-px flex">
        <div className="relative h-[104px] min-w-0 flex-1 border border-[#b0b0b0]">
            <svg className="h-full w-full" aria-label="Signal Square">
                <g transform="translate(-5 -527)">
                    {HOLLOW_ARROWS.map(([dir, x]) => (
                        <path
                            key={x}
                            d="M0 -4.5L3.5 -0.5H1.5V4.5H-1.5V-0.5H-3.5Z"
                            transform={`translate(${x} 547)${dir === 'up' ? '' : ' scale(1 -1)'}`}
                            fill="none"
                            stroke={dir === 'up' ? '#00d8d8' : '#d8a800'}
                        />
                    ))}
                    {CROSSES.map(([t, from, to]) =>
                        steps(from, to).map((x) => (
                            <path key={x} d={`M${x} 578.5l3 3M${x + 3} 578.5l-3 3`} stroke={t === 'y' ? '#f0c000' : '#00e0e0'} strokeWidth="1.2" />
                        )),
                    )}
                    {BLOCKS.map(([t, from, to]) => (
                        <rect key={from} x={from} y="603" width={to - from} height="5" fill={tone[t]} />
                    ))}
                    <rect x="5" y="620" width="928" height="6" fill="#0000e0" />
                    {DOWNTREND.map(([from, to]) => (
                        <rect key={from} x={from} y="620" width={to - from} height="6" fill="#e80000" />
                    ))}
                    {steps(6, 932).map((x) => (
                        <path key={x} d={`M${x} 621.5l2 3M${x + 2} 621.5l-2 3`} stroke="#000028" strokeWidth="0.8" />
                    ))}
                </g>
            </svg>
            <p className="absolute top-0 left-[3px] leading-3 text-white">Signal Square 0.0500 0.2200</p>
        </div>
        <div className="flex w-[35px] flex-col justify-between pt-0.5 pb-0.5 pl-0.5 leading-2">
            <span>1</span>
            <span>0</span>
        </div>
    </div>
);

const TimeAxis = () => (
    <svg className="h-[15px] w-full text-[8px]" aria-label="Time axis">
        {TIMES.map((time, i) => (
            <g key={time} fill="#f0f0f0">
                <rect x={1 + i * 50.8} y="0" width="1" height="2" />
                <text x={i * 50.8} y="10">{time}</text>
            </g>
        ))}
    </svg>
);

const ChartWindow = () => (
    <main className="border-t border-r-2 border-l-[3px] border-[#9a9a9a] bg-black pt-0.5 pr-px pl-px font-['Noto_Sans'] text-[7px] text-[#f0f0f0]">
        <PricePanel />
        <MacdPanel />
        <SquarePanel />
        <TimeAxis />
    </main>
);

/* ---------- footer ---------- */

const ChartTabs = () => (
    <div className="mt-px flex h-[17px] items-stretch border-t border-black pl-[5px] font-['Noto_Sans'] text-[9px] text-[#7c7c7c]">
        <button type="button" className="-mt-px w-16 border-r-2 border-b-2 border-l border-[#333] bg-white leading-3 text-black">
            USDJPY,H1
        </button>
        {TABS.map(([name, width]) => (
            <button key={name} type="button" className={clsx('my-0.5 shrink-0 border-r border-[#909090] leading-3 whitespace-nowrap', width)}>
                {name}
            </button>
        ))}
        <div className="flex flex-1 items-center justify-around px-1">
            <svg width="4" height="6" viewBox="0 0 4 6" aria-hidden="true"><path d="M3.5 0v6L0 3z" fill="#a0a0a0" /></svg>
            <svg width="4" height="6" viewBox="0 0 4 6" aria-hidden="true"><path d="M0.5 0v6L4 3z" fill="#000" /></svg>
        </div>
    </div>
);

const StatusBar = () => (
    <footer className="flex flex-1 items-center text-[9px] leading-4">
        <p className="flex-1 pl-0.5 whitespace-nowrap [font-feature-settings:'palt']">F1キーでヘルプが表示されます</p>
        {STATUS.map(([text, width]) => (
            <span key={text} className={clsx("shrink-0 border-l border-[#b8b8b8] pl-1 font-['Noto_Sans'] whitespace-nowrap", width)}>
                {text}
            </span>
        ))}
        <div className="flex w-[119px] shrink-0 items-center gap-1 border-l border-[#b8b8b8] pl-1 font-['Noto_Sans']">
            <svg width="19" height="11" viewBox="0 0 19 11" aria-hidden="true">
                {Array.from({ length: 9 }, (_, i) => (
                    <g key={i}>
                        <rect x={i * 2.1} y="0" width="1.5" height="11" fill="#7a8a20" />
                        <rect x={i * 2.1} y={8 - i * 0.8} width="1.5" height={3 + i * 0.8} fill="#153a68" />
                    </g>
                ))}
                <path d="M0 8L19 1" stroke="#f0f0f0" strokeWidth="0.8" />
            </svg>
            <span className="flex-1">2009/5 kb</span>
            <svg width="12" height="12" viewBox="0 0 12 12" className="self-end" aria-hidden="true">
                <path d="M1 12L12 1M5 12l7-7M9 12l3-3" stroke="#8a8a8a" />
            </svg>
        </div>
    </footer>
);

export default function App() {
    return (
        <div className="flex min-h-screen flex-col overflow-hidden bg-[#f0f0f0] font-['Noto_Sans_CJK_JP','Noto_Sans',sans-serif] text-[#1c1c1c]">
            <header>
                <div className="h-[3px] bg-[#e6edf7]" />
                <MenuBar />
                <div className="mt-px border-b border-[#b0b0b0]" />
                <MainToolbar />
                <DrawingToolbar />
            </header>
            <ChartWindow />
            <ChartTabs />
            <StatusBar />
        </div>
    );
}
